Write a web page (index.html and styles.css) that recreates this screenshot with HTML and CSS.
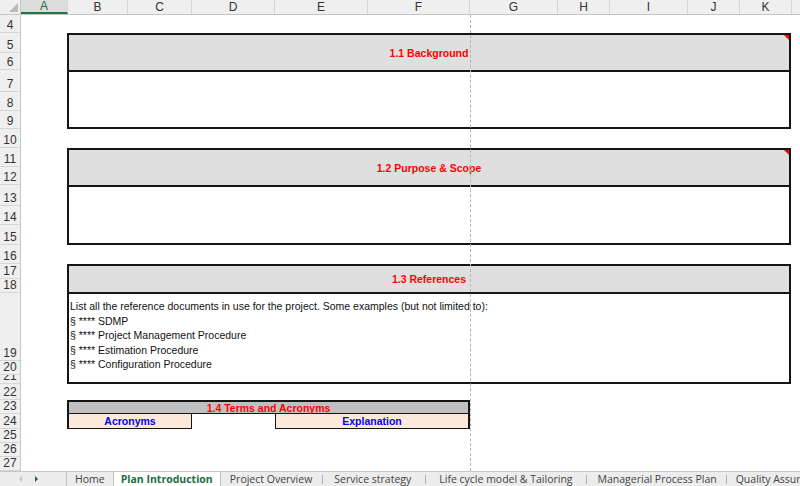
FILE: index.html
```html
<!DOCTYPE html>
<html>
<head>
<meta charset="utf-8">
<title>Plan Introduction</title>
<link rel="stylesheet" href="styles.css">
</head>
<body>
<div class="top">
  <div class="corner"><span class="corner-tri"></span></div>
  <div class="ch sel">A</div>
  <div class="ch">B</div>
  <div class="ch">C</div>
  <div class="ch">D</div>
  <div class="ch">E</div>
  <div class="ch">F</div>
  <div class="ch">G</div>
  <div class="ch">H</div>
  <div class="ch">I</div>
  <div class="ch">J</div>
  <div class="ch">K</div>
  <div class="ch last"></div>
</div>
<div class="main">
  <div class="rowheads">
    <div class="rh">4</div><div class="rh">5</div><div class="rh">6</div><div class="rh">7</div>
    <div class="rh">8</div><div class="rh">9</div><div class="rh">10</div><div class="rh">11</div>
    <div class="rh">12</div><div class="rh">13</div><div class="rh">14</div><div class="rh">15</div>
    <div class="rh">16</div><div class="rh">17</div><div class="rh">18</div><div class="rh">19</div>
    <div class="rh">20</div><div class="rh">21</div><div class="rh">22</div><div class="rh">23</div>
    <div class="rh">24</div><div class="rh">25</div><div class="rh">26</div><div class="rh">27</div>
  </div>
  <div class="sheet">
    <section class="box box-bg">
      <div class="hd">1.1 Background</div>
      <div class="bd"></div>
      <span class="note"></span>
    </section>
    <section class="box box-ps">
      <div class="hd">1.2 Purpose &amp; Scope</div>
      <div class="bd"></div>
      <span class="note"></span>
    </section>
    <section class="box box-ref">
      <div class="hd hd-short">1.3 References</div>
      <div class="bd">
        <div>List all the reference documents in use for the project. Some examples (but not limited to):</div>
        <div>§ **** SDMP</div>
        <div>§ **** Project Management Procedure</div>
        <div>§ **** Estimation Procedure</div>
        <div>§ **** Configuration Procedure</div>
      </div>
    </section>
    <div class="terms-hd">1.4 Terms and Acronyms</div>
    <div class="terms-col col-acr">Acronyms</div>
    <div class="terms-col col-exp">Explanation</div>
    <div class="pagebreak"></div>
  </div>
</div>
<div class="tabs">
  <div class="nav"><span class="arr-l"></span><span class="arr-r"></span></div>
  <div class="tab home">Home</div>
  <div class="tab active">Plan Introduction</div>
  <div class="tab po">Project Overview</div>
  <div class="tab sep ss">Service strategy</div>
  <div class="tab sep lc">Life cycle model &amp; Tailoring</div>
  <div class="tab sep mpp">Managerial Process Plan</div>
  <div class="tab sep qa">Quality Assurance Plan</div>
</div>
</body>
</html>
```
FILE: styles.css
```css
:root {
  --cols: 47px 60px 64px 83px 93px 102px 88px 52px 78px 52px 52px 1fr;
  --rows: 18px 20px 17px 22px 19px 18px 19px 19px 18px 21px 19px 20px 19px 15px 14px 68px 14px 9px 16px 14px 15px 14px 14px 14px;
}
html, body {
  margin: 0;
  padding: 0;
}
body {
  width: 800px;
  height: 486px;
  overflow: hidden;
  background: #fff;
  font-family: "Liberation Sans", Arial, sans-serif;
  color: #111;
}
.top {
  display: grid;
  grid-template-columns: 21px var(--cols);
  height: 15px;
  background: #efefef;
  border-bottom: 1px solid #c6c6c6;
  box-sizing: border-box;
}
.corner {
  display: flex;
  align-items: flex-end;
  justify-content: flex-end;
  padding: 0 2px 2px 0;
  border-right: 1px solid #c6c6c6;
}
.corner-tri {
  width: 0;
  height: 0;
  border-bottom: 9px solid #b9b9b9;
  border-left: 9px solid transparent;
}
.ch {
  border-right: 1px solid #d6d6d6;
  text-align: center;
  font-size: 12px;
  line-height: 14px;
  color: #333;
  overflow: hidden;
}
.ch.sel {
  background: #dcdcdc;
  color: #1e6e42;
  border-bottom: 2px solid #217346;
  line-height: 13px;
}
.ch.last {
  border-right: none;
}
.main {
  display: flex;
  height: 456px;
}
.rowheads {
  width: 21px;
  flex: none;
  display: grid;
  grid-template-rows: var(--rows);
  background: #efefef;
  border-right: 1px solid #c6c6c6;
  box-sizing: border-box;
}
.rh {
  display: flex;
  align-items: flex-end;
  justify-content: center;
  overflow: hidden;
  border-bottom: 1px solid #d6d6d6;
  font-size: 12px;
  line-height: 13px;
  color: #333;
  box-sizing: border-box;
}
.sheet {
  flex: 1;
  position: relative;
  display: grid;
  grid-template-columns: var(--cols);
  grid-template-rows: var(--rows);
}
.box {
  grid-column: 2 / 12;
  position: relative;
  display: flex;
  flex-direction: column;
  border: 2px solid #151515;
  margin: 0 1px 0 -1px;
}
.box-bg { grid-row: 2 / 7; }
.box-ps { grid-row: 8 / 13; }
.box-ref { grid-row: 14 / 19; }
.hd {
  flex: none;
  height: 35px;
  display: flex;
  align-items: center;
  justify-content: center;
  background: #dfdfdf;
  border-bottom: 2px solid #151515;
  color: #ff0000;
  font-weight: bold;
  font-size: 10.5px;
}
.hd.hd-short {
  height: 26px;
}
.bd {
  flex: 1;
  padding: 5px 1px;
  font-size: 10.5px;
  line-height: 14.5px;
  color: #111;
  white-space: nowrap;
}
.note {
  position: absolute;
  top: 0;
  right: 0;
  width: 0;
  height: 0;
  border-top: 5px solid #ff0000;
  border-left: 5px solid transparent;
}
.terms-hd {
  grid-column: 2 / 7;
  grid-row: 20;
  margin-left: -1px;
  background: #c0c0c0;
  border: 2px solid #151515;
  border-bottom-width: 1px;
  color: #ff0000;
  font-weight: bold;
  font-size: 10.5px;
  line-height: 12px;
  text-align: center;
}
.terms-col {
  grid-row: 21;
  background: #fde9d9;
  border-bottom: 1px solid #151515;
  color: #0000ff;
  font-weight: bold;
  font-size: 10.5px;
  line-height: 14px;
  text-align: center;
}
.col-acr {
  grid-column: 2 / 4;
  margin-left: -1px;
  border-left: 2px solid #151515;
  border-right: 1px solid #151515;
}
.col-exp {
  grid-column: 5 / 7;
  border-left: 1px solid #151515;
  border-right: 2px solid #151515;
}
.pagebreak {
  position: absolute;
  left: 449px;
  top: 0;
  bottom: 0;
  width: 0;
  border-left: 1px dashed #b4b4b4;
}
.tabs {
  height: 15px;
  display: flex;
  align-items: stretch;
  overflow: hidden;
  background: #ececec;
  border-top: 1px solid #c6c6c6;
  box-sizing: border-box;
  font-family: "Open Sans", "Noto Sans", sans-serif;
  font-size: 10.5px;
  color: #444;
  white-space: nowrap;
}
.nav {
  width: 67px;
  flex: none;
  display: flex;
  align-items: center;
  gap: 13px;
  padding-left: 19px;
  box-sizing: border-box;
  border-right: 1px solid #c0c0c0;
}
.arr-l {
  width: 0;
  height: 0;
  border-top: 3px solid transparent;
  border-bottom: 3px solid transparent;
  border-right: 3px solid #c4c4c4;
}
.arr-r {
  width: 0;
  height: 0;
  border-top: 3px solid transparent;
  border-bottom: 3px solid transparent;
  border-left: 3px solid #2d5a3d;
}
.tab {
  flex: none;
  display: flex;
  align-items: center;
  padding: 0 12px;
  position: relative;
}
.tab.home {
  padding: 0 8px;
}
.tab.po {
  padding: 0 10px 0 9px;
}
.tab.ss {
  padding: 0 14px 0 12px;
}
.tab.lc {
  padding: 0 13px 0 14px;
}
.tab.mpp {
  padding: 0 9px 0 12px;
}
.tab.qa {
  padding: 0 10px;
}
.tab.sep::before {
  content: "";
  position: absolute;
  left: 0;
  top: 3px;
  bottom: 2px;
  border-left: 1px solid #b0b0b0;
}
.tab.active {
  padding: 0 7px;
  background: #fff;
  color: #1e6e42;
  font-weight: bold;
  border-left: 1px solid #c0c0c0;
  border-right: 1px solid #c0c0c0;
  margin-top: -1px;
}
```
